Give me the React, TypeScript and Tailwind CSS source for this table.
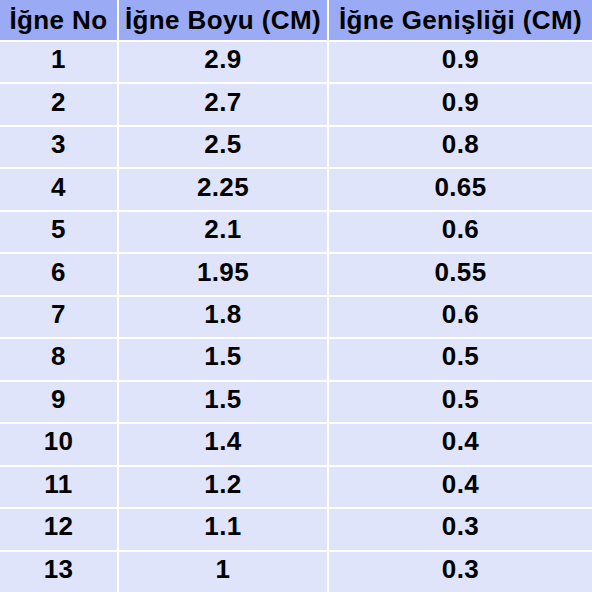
import React from "react";

const rows: [string, string, string][] = [
  ["1", "2.9", "0.9"],
  ["2", "2.7", "0.9"],
  ["3", "2.5", "0.8"],
  ["4", "2.25", "0.65"],
  ["5", "2.1", "0.6"],
  ["6", "1.95", "0.55"],
  ["7", "1.8", "0.6"],
  ["8", "1.5", "0.5"],
  ["9", "1.5", "0.5"],
  ["10", "1.4", "0.4"],
  ["11", "1.2", "0.4"],
  ["12", "1.1", "0.3"],
  ["13", "1", "0.3"],
];

export default function App() {
  return (
    <div
      className="w-[592px] h-[592px] bg-white grid grid-cols-[117px_208px_1fr] grid-rows-[40px_repeat(13,1fr)] gap-[2px] text-black font-bold text-[26px] leading-none tracking-[0.4px]"
      style={{ fontFamily: '"Liberation Sans", Arial, sans-serif' }}
    >
      <div className="bg-[#9aaaf4] flex items-center justify-center whitespace-nowrap">İğne No</div>
      <div className="bg-[#9aaaf4] flex items-center justify-center whitespace-nowrap">İğne Boyu (CM)</div>
      <div className="bg-[#9aaaf4] flex items-center justify-center whitespace-nowrap">İğne Genişliği (CM)</div>
      {rows.map((r, i) => (
        <React.Fragment key={i}>
          <div className="bg-[#dfe4fb] flex items-center justify-center pb-[6px]">{r[0]}</div>
          <div className="bg-[#dfe4fb] flex items-center justify-center pb-[6px]">{r[1]}</div>
          <div className="bg-[#dfe4fb] flex items-center justify-center pb-[6px]">{r[2]}</div>
        </React.Fragment>
      ))}
    </div>
  );
}
